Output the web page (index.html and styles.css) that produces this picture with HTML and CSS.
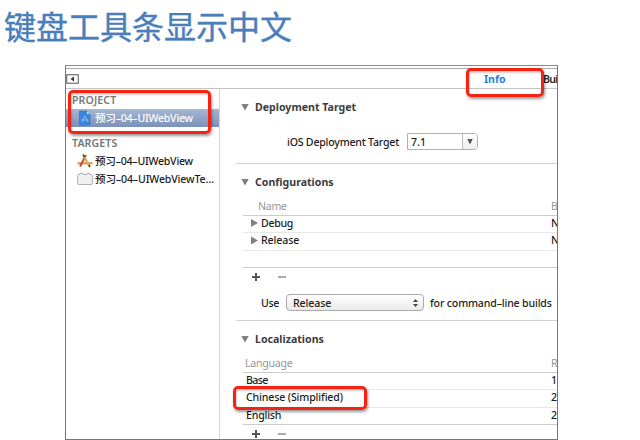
FILE: index.html
```
<!DOCTYPE html>
<html lang="zh">
<head>
<meta charset="utf-8">
<title>键盘工具条显示中文</title>
<link rel="stylesheet" href="styles.css">
</head>
<body>
<h1>键盘工具条显示中文</h1>
<div class="window">
  <div class="tabs">
    <svg class="toggle" width="13" height="10" viewBox="0 0 13 10"><rect x=".75" y=".75" width="11.5" height="8.5" fill="#fff" stroke="#555"/><path d="M8 2.5v5L4.5 5z" fill="#333"/></svg>
    <span class="tab active">Info</span><span class="tab build">Bui</span>
  </div>
  <div class="body">
    <div class="side">
      <div class="group">PROJECT</div>
      <div class="item selected">
        <svg width="16" height="16" viewBox="0 0 16 16"><path d="M2.500 1h7.500l3 3v11H2.500z" fill="#3c86df" stroke="#2b69bd" stroke-width=".6"/><path d="M10 1v3h3z" fill="#d5e8ff"/><path d="M5 12l3-6 3 6M4.500 10h7" fill="none" stroke="#8fc2f5" stroke-width=".9"/></svg>
        <span>预习–04–UIWebView</span>
      </div>
      <div class="group targets">TARGETS</div>
      <div class="item">
        <svg width="16" height="16" viewBox="0 0 16 16"><path d="M.5 10.300h15" stroke="#d09a68" stroke-width="2.200"/><path d="M9 2L3 13.500" stroke="#c8452f" stroke-width="1.900"/><path d="M6.500 2.500l6 11" stroke="#e3ad45" stroke-width="2.200"/><path d="M6 1.500l1.500 2.800M11.800 12l1.200 2.200" stroke="#5a4538" stroke-width="1.600"/></svg>
        <span>预习–04–UIWebView</span>
      </div>
      <div class="item">
        <svg width="16" height="16" viewBox="0 0 16 16"><path d="M.6 4.500q0-1 1-1H3V2.300h3v1.200h4V2.300h3v1.200h1.400q1 0 1 1v8q0 1-1 1H1.600q-1 0-1-1z" fill="#f0f0f0" stroke="#aaa" stroke-width=".9"/></svg>
        <span class="long">预习–04–UIWebViewTe…</span>
      </div>
    </div>
    <div class="main">
      <section class="deploy">
        <h2><i class="down"></i><span>Deployment Target</span></h2>
        <div class="field"><span class="field-label">iOS Deployment Target</span><div class="combo"><span>7.1</span><b><i class="down small"></i></b></div></div>
      </section>
      <section class="config">
        <h2><i class="down"></i><span>Configurations</span></h2>
        <div class="table">
          <div class="row head"><span class="name">Name</span><span class="last">B</span></div>
          <div class="row"><i class="right"></i><span class="debug">Debug</span><span class="last">N</span></div>
          <div class="row"><i class="right"></i><span class="release">Release</span><span class="last">N</span></div>
          <div class="row end"></div>
        </div>
        <div class="buttons"><i class="plus"></i><i class="minus"></i></div>
        <div class="use"><span class="use-label">Use</span><div class="select"><span class="release">Release</span><svg width="5" height="8" viewBox="0 0 5 8"><path d="M0 3l2.500-3L5 3zM0 5h5L2.500 8z" fill="#444"/></svg></div><span class="use-tail">for command–line builds</span></div>
      </section>
      <section class="local">
        <h2><i class="down"></i><span>Localizations</span></h2>
        <div class="table">
          <div class="row head"><span class="language">Language</span><span class="last">R</span></div>
          <div class="row"><span class="base">Base</span><span class="last">1</span></div>
          <div class="row"><span class="chinese">Chinese (Simplified)</span><span class="last">2</span></div>
          <div class="row end"><span class="english">English</span><span class="last">2</span></div>
        </div>
        <div class="buttons"><i class="plus"></i><i class="minus"></i></div>
      </section>
    </div>
  </div>
</div>
<div class="mark mark-project"></div>
<div class="mark mark-info"></div>
<div class="mark mark-chinese"></div>
</body>
</html>
```
FILE: styles.css
```
* { box-sizing: border-box; }
body { margin: 0; width: 640px; height: 440px; overflow: hidden; position: relative; background: #fff; color: #1c1c1c; font: 500 10.6px/16px "Noto Sans", "Noto Sans CJK SC", sans-serif; white-space: nowrap; }
h1 { margin: 0; height: 65px; padding: 2px 0 0 4px; font: 400 32px/46px "Noto Sans CJK SC", sans-serif; color: #4a7ebb; -webkit-text-stroke: .4px #4a7ebb; }
i { display: block; flex: none; }
.window { margin-left: 65px; width: 493px; height: 375px; border: 1px solid #777; border-top-color: #8a8a8a; overflow: hidden; }
.tabs { height: 21px; margin-top: 2px; border-top: 1px solid #aaa; border-bottom: 1px solid #c4c4c4; display: flex; align-items: center; }
.toggle { flex: none; }
.tab { font-weight: 700; flex: none; }
.active { margin-left: 405px; width: 59px; color: #1d84dc; }
.build { letter-spacing: -.8px; font-weight: 600; }
.body { display: flex; height: 350px; }
.side { width: 154px; flex: none; border-right: 1px solid #d4d4d4; }
.group { height: 20px; padding: 4px 0 0 6px; line-height: 15px; font-weight: 600; color: #777; letter-spacing: .1px; }
.targets { height: 25px; padding-top: 9px; }
.item { height: 18px; padding-left: 11px; display: flex; align-items: center; gap: 2px; letter-spacing: -.25px; }
.item svg { flex: none; }
.long { letter-spacing: -.15px; }
.selected { background: linear-gradient(#a6b6d3, #7b91bb); color: #fff; }
.main { flex: 1; min-width: 0; padding-left: 16px; }
section { border-bottom: 1px solid #d2d2d2; }
.deploy { height: 75px; }
.config { height: 157px; }
.local { height: 118px; border: 0; }
h2 { margin: 0; padding: 9px 0 0 5px; height: 27px; display: flex; align-items: center; gap: 6px; font: 700 10.6px/18px "Noto Sans", sans-serif; color: #3c3c3c; }
.down { width: 8px; height: 7px; background: #808080; clip-path: polygon(0 0, 100% 0, 50% 100%); }
.right { width: 7px; height: 8px; background: #808080; clip-path: polygon(0 0, 100% 50%, 0 100%); margin-left: 8px; margin-right: 3px; }
.field { display: flex; align-items: center; margin: 17px 0 0 51px; height: 17px; }
.field-label { width: 120px; letter-spacing: -.22px; }
.combo { width: 71px; height: 17px; border: 1px solid #b2b2b2; border-radius: 0 4px 4px 0; display: flex; align-items: center; padding-left: 3px; justify-content: space-between; }
.combo b { width: 15px; height: 15px; border-left: 1px solid #bbb; display: flex; align-items: center; justify-content: center; background: linear-gradient(#fff, #eee); border-radius: 0 3px 3px 0; }
.small { width: 6px; height: 6px; background: #555; }
.table { margin-left: 7px; }
.row { height: 17.6px; padding-bottom: 2px; border-bottom: 1px solid #e8e8e8; display: flex; align-items: center; }
.row.end, .row.head { border-color: #ccc; }
.row.head { color: #969696; font-weight: 400; padding-bottom: 0; }
.last { margin-left: auto; width: 6px; flex: none; }
.config .table { margin-top: 7px; }
.name { margin-left: 15px; letter-spacing: -.3px; }
.debug { letter-spacing: -.3px; }
.release { letter-spacing: -.1px; }
.local .table { margin-top: 7px; }
.language { margin-left: 2px; letter-spacing: -.25px; }
.base, .chinese, .english { margin-left: 3px; letter-spacing: -.15px; }
.base { letter-spacing: -.6px; }
.english { letter-spacing: -.2px; }
.buttons { height: 17px; display: flex; align-items: center; padding-left: 16px; gap: 18px; }
.plus { width: 8px; height: 8px; background: linear-gradient(#555, #555) center / 8px 2px no-repeat, linear-gradient(#555, #555) center / 2px 8px no-repeat; }
.minus { width: 8px; height: 2px; background: #aaa; }
.use { display: flex; align-items: center; margin: 9px 0 0 25px; height: 17px; }
.use-label { width: 25px; letter-spacing: -.4px; }
.select { width: 138px; height: 17px; margin-right: 6px; border: 1px solid #aaa; border-radius: 4px; background: linear-gradient(#fff, #f4f4f4 50%, #eaeaea); display: flex; align-items: center; justify-content: space-between; padding: 0 5px 0 6px; }
.use-tail { letter-spacing: -.17px; }
.mark { position: absolute; border: 3px solid #f52312; border-radius: 5px; box-shadow: 1px 2px 3px #0006, inset 1px 2px 2px #0003; }
.mark-project { left: 68px; top: 90px; width: 143px; height: 44px; }
.mark-info { left: 466px; top: 68px; width: 78px; height: 29px; }
.mark-chinese { left: 233px; top: 386px; width: 134px; height: 24px; }
```
